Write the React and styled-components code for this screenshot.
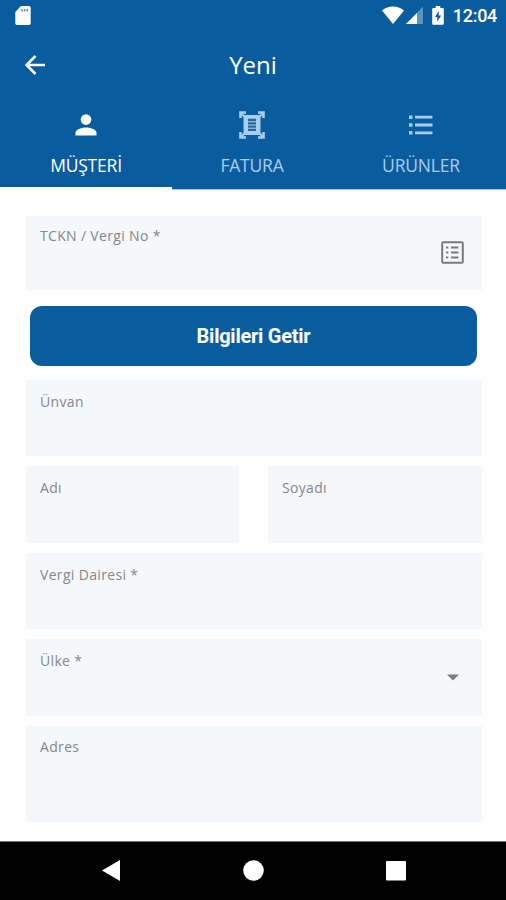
import { useState } from 'react'
import styled, { createGlobalStyle } from 'styled-components'

const GlobalStyle = createGlobalStyle`
  * {
    box-sizing: border-box;
  }

  body {
    margin: 0;
    background: #fefefe;
    font-family: 'Open Sans', 'Noto Sans', sans-serif;
  }
`

const Screen = styled.div`
  display: flex;
  flex-direction: column;
  width: 506px;
  height: 900px;
  overflow: hidden;
`

const Header = styled.header`
  height: 190px;
  background: #095d9e;
  color: white;
`

const StatusBar = styled.div`
  display: flex;
  justify-content: space-between;
  height: 32px;
  padding: 6px 9px 0 15px;
`

const StatusIcons = styled.div`
  display: flex;
  align-items: flex-start;
`

const Clock = styled.span`
  margin-left: 9px;
  font-family: Roboto, sans-serif;
  font-weight: 500;
  font-size: 18px;
  line-height: 20px;
  letter-spacing: -0.3px;
`

const TitleBar = styled.div`
  display: grid;
  grid-template-columns: 70px 1fr 70px;
  align-items: center;
  height: 65px;
`

const BackButton = styled.button`
  display: flex;
  padding: 0 0 0 25px;
  border: 0;
  background: none;
  color: inherit;
`

const Title = styled.h1`
  margin: 0;
  font-weight: 400;
  font-size: 24px;
  line-height: 32px;
  text-align: center;
`

const Tabs = styled.nav`
  display: grid;
  grid-template-columns: 172px 160px 178px;
  height: 93px;
`

const Tab = styled.button`
  display: flex;
  flex-direction: column;
  align-items: center;
  padding: 13px 0 0;
  border: 0;
  border-bottom: ${({ $active }) => $active ? '3px solid white' : '1px solid #a9c6e3'};
  background: none;
  color: ${({ $active }) => $active ? 'white' : '#a9cdee'};
  font-family: inherit;
  font-size: 17.5px;
`

const TabIcon = styled.span`
  display: flex;
  align-items: center;
  justify-content: center;
  height: 30px;
`

const TabLabel = styled.span`
  margin-top: 13px;
  line-height: 24px;
  letter-spacing: -0.2px;
`

const Form = styled.main`
  flex: 1;
  padding: 26px 24px 0 26px;
`

const Field = styled.label`
  display: flex;
  align-items: flex-start;
  justify-content: space-between;
  height: ${({ $height }) => $height || 76}px;
  margin-bottom: ${({ $gap }) => $gap || 10}px;
  padding: ${({ $top }) => $top || 12}px 17px 0 14px;
  background: #f4f8fb;
`

const FieldLabel = styled.span`
  color: #858789;
  font-size: 14px;
  line-height: 20px;
  letter-spacing: 0.33px;
`

const FieldIcon = styled.span`
  display: flex;
  width: 25px;
  height: 52px;
  align-items: center;
  justify-content: center;
`

const Row = styled.div`
  display: grid;
  grid-template-columns: 213px 214px;
  column-gap: 29px;
`

const SubmitButton = styled.button`
  display: block;
  width: 447px;
  height: 60px;
  margin: 0 0 14px 4px;
  padding: 0;
  border: 0;
  border-radius: 12px;
  background: #095d9e;
  color: white;
  font-family: Roboto, sans-serif;
  font-weight: 700;
  font-size: 20px;
  line-height: 60px;
  letter-spacing: -0.25px;
`

const NavBar = styled.footer`
  display: flex;
  justify-content: space-between;
  height: 59px;
  padding: 18px 100px 0 102px;
  border-top: 1px solid #777;
  background: black;
`

const SdCardIcon = () => (
  <svg width="16" height="19" viewBox="0 0 16 19">
    <path fill="white" d="M6 0h8a1.7 1.7 0 0 1 1.7 1.7v15.6A1.7 1.7 0 0 1 14 19H2a1.7 1.7 0 0 1-1.7-1.7V6z" />
    <path fill="#5f94c0" d="M6.2 3h1.6v2.4H6.2zM8.8 3h1.6v2.4H8.8zM11.4 3H13v2.4h-1.6z" />
  </svg>
)

const WifiIcon = () => (
  <svg width="22" height="19" viewBox="0 0 22 19">
    <path fill="white" d="M0 4.5C6.2-.8 15.8-.8 22 4.5L11 18z" />
  </svg>
)

const SignalIcon = () => (
  <svg width="20" height="19" viewBox="0 0 20 19">
    <path fill="#5b94c2" d="M19 .5V18H2z" />
    <path fill="white" d="M13 7v11H2z" />
  </svg>
)

const BatteryIcon = () => (
  <svg width="20" height="19" viewBox="-8 0 20 19">
    <path fill="white" d="M3.7 0h4.6v2h2.2c.8 0 1.3.5 1.3 1.3v14.2c0 .8-.5 1.3-1.3 1.3h-9c-.8 0-1.3-.5-1.3-1.3V3.3C.2 2.5.7 2 1.5 2h2.2z" />
    <path fill="#095d9e" d="M6.7 5v4.500h2.500l-3.900 6v-4.600H3z" />
  </svg>
)

const BackIcon = () => (
  <svg width="20" height="20" viewBox="0 0 20 20" fill="none" stroke="white" strokeWidth="2.6">
    <path d="M20 10H2M10.500 1l-9 9 9 9" />
  </svg>
)

const PersonIcon = () => (
  <svg width="22" height="22" viewBox="0 0 22 22" fill="currentColor">
    <circle cx="11" cy="5.6" r="5.3" />
    <path d="M.5 21.500v-2.700c0-3.600 7-5.300 10.500-5.300s10.500 1.700 10.500 5.300v2.700z" />
  </svg>
)

const InvoiceIcon = () => (
  <svg width="26" height="28" viewBox="0 0 26 28">
    <g fill="none" stroke="currentColor" strokeWidth="2.6">
      <path d="M1.500 7V1.500H7M19 1.500h5.500V7M24.500 21v5.500H19M7 26.500H1.500V21" />
      <path d="M2 2l5 5M24 2l-5 5M24 26l-5-5M2 26l5-5" strokeWidth="2" />
    </g>
    <rect x="4.5" y="4" width="17" height="20" rx="2" fill="currentColor" />
    <path d="M9 9h8M9 12.300h8M9 15.600h8M9 18.900h8" stroke="#26699f" strokeWidth="2.3" />
  </svg>
)

const ListIcon = () => (
  <svg width="24" height="20" viewBox="0 0 24 20" fill="currentColor">
    <path d="M0 .5h3.500V4H0zM6 .7h17.500v2.800H6zM0 8.200h3.500v3.500H0zM6 8.600h17.500v2.800H6zM0 16h3.500v3.500H0zM6 16.500h17.500v2.800H6z" />
  </svg>
)

const ListBoxIcon = () => (
  <svg width="23" height="23" viewBox="0 0 23 23" fill="none" stroke="#777b7d" strokeWidth="2">
    <rect x="1.2" y="1.2" width="20.6" height="20.6" rx="1" />
    <path d="M5 6.500h2.300M10 6.500h7.500M5 11.500h2.300M10 11.500h7.500M5 16.500h2.300M10 16.500h7.500" />
  </svg>
)

const CaretIcon = () => (
  <svg width="12" height="7" viewBox="0 0 12 7">
    <path fill="#777b7d" d="M0 .5h12L6 6.500z" />
  </svg>
)

const tabs = [
  { id: 'customer', label: 'MÜŞTERİ', Icon: PersonIcon },
  { id: 'invoice', label: 'FATURA', Icon: InvoiceIcon },
  { id: 'products', label: 'ÜRÜNLER', Icon: ListIcon }
]

const App = () => {
  const [activeTab, setActiveTab] = useState('customer')

  return (
    <Screen>
      <GlobalStyle />
      <Header>
        <StatusBar>
          <SdCardIcon />
          <StatusIcons>
            <WifiIcon />
            <SignalIcon />
            <BatteryIcon />
            <Clock>12:04</Clock>
          </StatusIcons>
        </StatusBar>

        <TitleBar>
          <BackButton aria-label="Geri"><BackIcon /></BackButton>
          <Title>Yeni</Title>
        </TitleBar>

        <Tabs>
          {tabs.map(({ id, label, Icon }) => (
            <Tab key={id} $active={id === activeTab} onClick={() => setActiveTab(id)}>
              <TabIcon><Icon /></TabIcon>
              <TabLabel>{label}</TabLabel>
            </Tab>
          ))}
        </Tabs>
      </Header>

      <Form>
        <Field $height={74} $gap={16} $top={10}>
          <FieldLabel>TCKN / Vergi No *</FieldLabel>
          <FieldIcon><ListBoxIcon /></FieldIcon>
        </Field>

        <SubmitButton>Bilgileri Getir</SubmitButton>

        <Field>
          <FieldLabel>Ünvan</FieldLabel>
        </Field>
        <Row>
          <Field $height={77}>
            <FieldLabel>Adı</FieldLabel>
          </Field>
          <Field $height={77}>
            <FieldLabel>Soyadı</FieldLabel>
          </Field>
        </Row>
        <Field>
          <FieldLabel>Vergi Dairesi *</FieldLabel>
        </Field>
        <Field $height={77}>
          <FieldLabel>Ülke *</FieldLabel>
          <FieldIcon><CaretIcon /></FieldIcon>
        </Field>
        <Field $height={96} $top={11}>
          <FieldLabel>Adres</FieldLabel>
        </Field>
      </Form>

      <NavBar>
        <svg width="18" height="21" viewBox="0 0 18 21">
          <path fill="white" d="M18 0v21L0 10.500z" />
        </svg>
        <svg width="21" height="21" viewBox="0 0 21 21">
          <circle cx="10.5" cy="10.5" r="10.3" fill="white" />
        </svg>
        <svg width="20" height="21" viewBox="0 0 20 21">
          <rect y="1" width="20" height="19.5" rx="1" fill="white" />
        </svg>
      </NavBar>
    </Screen>
  )
}

export default App
